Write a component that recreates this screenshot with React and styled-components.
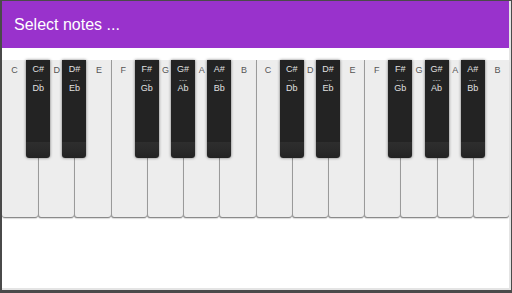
import React from "react";
import styled, { createGlobalStyle } from "styled-components";

const Global = createGlobalStyle`
  html, body { margin: 0; padding: 0; background: #fff; }
  * { box-sizing: border-box; }
`;

const Frame = styled.div`
  width: 512px;
  height: 293px;
  border-top: 1px solid #4a4a4a;
  border-left: 2px solid #4a4a4a;
  border-right: 1px solid #4a4a4a;
  border-bottom: 3px solid #4a4a4a;
  display: flex;
  flex-direction: column;
  background: #fff;
  font-family: "Liberation Sans", Arial, sans-serif;
`;

const Inner = styled.div`
  flex: 1;
  display: flex;
  flex-direction: column;
  border-right: 2px solid #e4e4e4;
  border-bottom: 2px solid #e4e4e4;
`;

const Header = styled.div`
  height: 47px;
  background: #9932cc;
  color: #fff;
  font-size: 16px;
  display: flex;
  align-items: center;
  padding-left: 12px;
`;

const Keyboard = styled.div`
  display: grid;
  grid-template-columns: repeat(14, minmax(0, 1fr));
  margin-top: 12px;
  height: 158px;
`;

const WhiteKey = styled.div`
  position: relative;
  height: 157px;
  background: #ededed;
  border-left: 1px solid ${(p) => (p.$first ? "#ededed" : "#9a9a9a")};
  border-radius: 0 0 3px 3px;
  box-shadow: 0 1px 0 #8a8a8a, 0 2px 1px rgba(0,0,0,0.15);
  padding-top: 5px;
  padding-left: ${(p) => (p.$left ? 12 : 0)}px;
  padding-right: ${(p) => (p.$right ? 12 : 0)}px;
`;

const WhiteLabel = styled.div`
  text-align: center;
  font-size: 9px;
  color: #555;
`;

const BlackKey = styled.div`
  position: absolute;
  top: 0;
  right: -12px;
  width: 24px;
  height: 98px;
  z-index: 2;
  background: linear-gradient(#232323 0%, #232323 84%, #2e2e2e 84%, #2a2a2a 91%, #222 100%);
  border-radius: 0 0 3px 3px;
  box-shadow: 0 0 3px rgba(0,0,0,0.55);
  display: flex;
  flex-direction: column;
  align-items: center;
  padding-top: 5px;
  color: #e0e0e0;
  font-size: 9px;
  line-height: 9.5px;
`;

const Dash = styled.span`
  color: #bbb;
  font-size: 8px;
  line-height: 9.5px;
`;

const octave = [
  { n: "C", left: false, black: ["C#", "Db"] },
  { n: "D", left: true, black: ["D#", "Eb"] },
  { n: "E", left: true, black: null },
  { n: "F", left: false, black: ["F#", "Gb"] },
  { n: "G", left: true, black: ["G#", "Ab"] },
  { n: "A", left: true, black: ["A#", "Bb"] },
  { n: "B", left: true, black: null },
];

const keys = [...octave, ...octave];

export default function App() {
  return (
    <>
      <Global />
      <Frame>
        <Inner>
          <Header>Select notes ...</Header>
          <Keyboard>
            {keys.map((k, i) => (
              <WhiteKey key={i} $first={i === 0} $left={k.left} $right={!!k.black}>
                <WhiteLabel>{k.n}</WhiteLabel>
                {k.black && (
                  <BlackKey>
                    <span>{k.black[0]}</span>
                    <Dash>---</Dash>
                    <span>{k.black[1]}</span>
                  </BlackKey>
                )}
              </WhiteKey>
            ))}
          </Keyboard>
        </Inner>
      </Frame>
    </>
  );
}
